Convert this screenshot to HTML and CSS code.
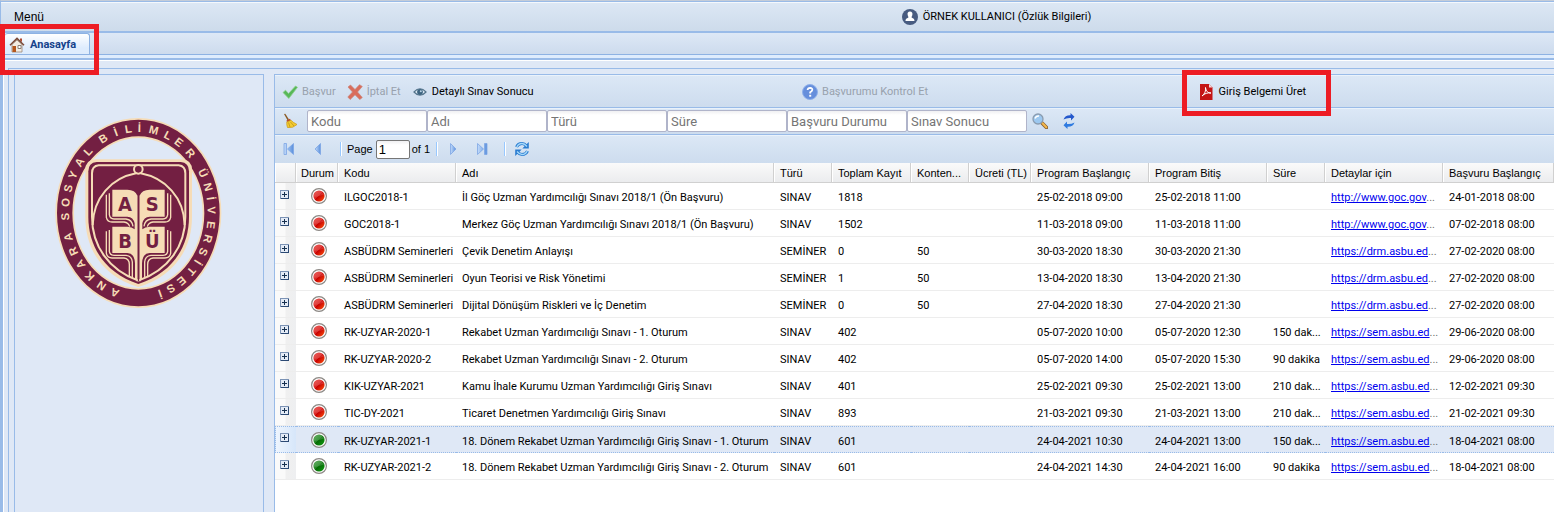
FILE: index.html
```html
<!DOCTYPE html>
<html lang="tr">
<head>
<meta charset="utf-8">
<title>Anasayfa</title>
<link rel="stylesheet" href="styles.css">
</head>
<body>
<svg class="defs" aria-hidden="true">
  <defs>
    <linearGradient id="gRed" x1="0" y1="0" x2="1" y2="1"><stop offset="0" stop-color="#e8504c"/><stop offset=".48" stop-color="#d8201c"/><stop offset=".5" stop-color="#c80000"/><stop offset="1" stop-color="#ff5a10"/></linearGradient>
    <linearGradient id="gGreen" x1="0" y1="0" x2="1" y2="1"><stop offset="0" stop-color="#58a858"/><stop offset=".48" stop-color="#1c801c"/><stop offset=".5" stop-color="#046a04"/><stop offset="1" stop-color="#12a012"/></linearGradient>
    <linearGradient id="gBlue" x1="0" y1="0" x2="1" y2="0"><stop offset="0" stop-color="#c4dcfb"/><stop offset="1" stop-color="#5a8fdc"/></linearGradient>
    <symbol id="red" viewBox="0 0 16 16"><circle cx="8" cy="8" r="7.4" fill="#fff" stroke="#8c8884" stroke-width="1.2"/><circle cx="8" cy="8" r="5.6" fill="url(#gRed)"/><path d="M3 8.6C6 9.400 9 7.500 13 6.500A5.200 5.200 0 0 0 3 7Z" fill="#f08080" opacity=".3"/></symbol>
    <symbol id="green" viewBox="0 0 16 16"><circle cx="8" cy="8" r="7.4" fill="#fff" stroke="#8c8884" stroke-width="1.2"/><circle cx="8" cy="8" r="5.6" fill="url(#gGreen)"/><path d="M3 8.600C6 9.400 9 7.500 13 6.500A5.200 5.200 0 0 0 3 7Z" fill="#8cc88c" opacity=".3"/></symbol>
    <symbol id="plus" viewBox="0 0 9 9"><path d="M0 0H9V9H0Z" fill="#7c93b5"/><path d="M1 1H8V8H1Z" fill="#e4ebf6"/><path d="M8 1H9V9H1V8H8Z" fill="#2c4a74"/><path d="M2 4H7V5H2ZM4 2H5V7H4Z" fill="#16304f"/></symbol>
  </defs>
</svg>

<header class="menubar">
  <button class="menu-btn">Menü</button>
  <button class="user">
    <svg width="16" height="16" viewBox="0 0 16 16"><circle cx="8" cy="8" r="8" fill="#475b80"/><path d="M8 2.600C9.900 2.600 10.700 4 10.400 5.600C10.300 6.900 9.600 7.600 9.600 8.600C10.500 9.300 12.300 9.400 12.500 12H3.500C3.700 9.400 5.500 9.300 6.400 8.600C6.400 7.600 5.700 6.900 5.600 5.600C5.300 4 6.100 2.600 8 2.600Z" fill="#fff"/></svg>
    <span>ÖRNEK KULLANICI (Özlük Bilgileri)</span>
  </button>
</header>

<nav class="tabs">
  <a class="tab" href="#">
    <svg width="16" height="16" viewBox="0 0 16 16"><path d="M3 7.500L8 3L13 7.500V15H3Z" fill="#f3ece2" stroke="#9a8674" stroke-width=".8"/><path d="M11 1.500H13V5L11 3.500Z" fill="#b04a30"/><path d="M1 8.200L8 1.400L15 8.200" fill="none" stroke="#7a4a38" stroke-width="1.500"/><path d="M3.500 9H7V15H3.500Z" fill="#b4561c"/><path d="M9 8.500H12V11.500H9Z" fill="#fff" stroke="#8a8078"/></svg>
    <span>Anasayfa</span>
  </a>
  <span class="mark mark-tab"></span>
</nav>

<main class="frame">
  <div class="workspace">
    <aside class="side">
      <svg class="logo" viewBox="45 21 504 576" width="168" height="192" role="img" aria-label="Ankara Sosyal Bilimler Üniversitesi">
        <defs><path id="ring" d="M295 550A208 242 0 0 1 295 66A208 242 0 0 1 295 550"/></defs>
        <path fill="#f6dcb6" fill-rule="evenodd" d="M295 24A249 285 0 0 1 295 594A249 285 0 0 1 295 24ZM295 84A193 225 0 0 0 295 534A193 225 0 0 0 295 84Z"/>
        <path fill="#731f42" fill-rule="evenodd" d="M295 29A244 280 0 0 1 295 589A244 280 0 0 1 295 29ZM295 79A198 230 0 0 0 295 539A198 230 0 0 0 295 79Z"/>
        <text class="ring-text"><textPath href="#ring" startOffset="4.8%">A</textPath></text>
        <text class="ring-text"><textPath href="#ring" startOffset="7.8%">N</textPath></text>
        <text class="ring-text"><textPath href="#ring" startOffset="10.900%">K</textPath></text>
        <text class="ring-text"><textPath href="#ring" startOffset="13.900%">A</textPath></text>
        <text class="ring-text"><textPath href="#ring" startOffset="16.900%">R</textPath></text>
        <text class="ring-text"><textPath href="#ring" startOffset="20%">A</textPath></text>
        <text class="ring-text"><textPath href="#ring" startOffset="24.200%">S</textPath></text>
        <text class="ring-text"><textPath href="#ring" startOffset="27.100%">O</textPath></text>
        <text class="ring-text"><textPath href="#ring" startOffset="30%">S</textPath></text>
        <text class="ring-text"><textPath href="#ring" startOffset="32.900%">Y</textPath></text>
        <text class="ring-text"><textPath href="#ring" startOffset="35.800%">A</textPath></text>
        <text class="ring-text"><textPath href="#ring" startOffset="38.600%">L</textPath></text>
        <text class="ring-text"><textPath href="#ring" startOffset="42.600%">B</textPath></text>
        <text class="ring-text"><textPath href="#ring" startOffset="45.400%">İ</textPath></text>
        <text class="ring-text"><textPath href="#ring" startOffset="48%">L</textPath></text>
        <text class="ring-text"><textPath href="#ring" startOffset="50.200%">İ</textPath></text>
        <text class="ring-text"><textPath href="#ring" startOffset="53.100%">M</textPath></text>
        <text class="ring-text"><textPath href="#ring" startOffset="56.100%">L</textPath></text>
        <text class="ring-text"><textPath href="#ring" startOffset="58.700%">E</textPath></text>
        <text class="ring-text"><textPath href="#ring" startOffset="61.900%">R</textPath></text>
        <text class="ring-text"><textPath href="#ring" startOffset="66.700%">Ü</textPath></text>
        <text class="ring-text"><textPath href="#ring" startOffset="69.700%">N</textPath></text>
        <text class="ring-text"><textPath href="#ring" startOffset="72.100%">İ</textPath></text>
        <text class="ring-text"><textPath href="#ring" startOffset="74.500%">V</textPath></text>
        <text class="ring-text"><textPath href="#ring" startOffset="77.500%">E</textPath></text>
        <text class="ring-text"><textPath href="#ring" startOffset="80.400%">R</textPath></text>
        <text class="ring-text"><textPath href="#ring" startOffset="83.200%">S</textPath></text>
        <text class="ring-text"><textPath href="#ring" startOffset="85.600%">İ</textPath></text>
        <text class="ring-text"><textPath href="#ring" startOffset="87.800%">T</textPath></text>
        <text class="ring-text"><textPath href="#ring" startOffset="90.600%">E</textPath></text>
        <text class="ring-text"><textPath href="#ring" startOffset="93.200%">S</textPath></text>
        <text class="ring-text"><textPath href="#ring" startOffset="95.600%">İ</textPath></text>
        <path fill="#f6dcb6" d="M165 148H427Q456 150 456 180V320C456 420 400 500 295 531C190 500 136 420 136 320V180Q136 150 165 148Z"/>
        <path fill="#731f42" d="M170 156H422Q447 158 447 184V320C447 414 394 490 295 522C198 490 145 414 145 320V184Q145 158 170 156Z"/>
        <path fill="none" stroke="#f6dcb6" stroke-width="6" d="M176 166H416Q436 168 436 190V320C436 408 386 480 295 512C206 480 156 408 156 320V190Q156 168 176 166Z"/>
        <path fill="none" stroke="#f6dcb6" stroke-width="6" d="M288 190C215 204 160 262 158 345M302 190C376 204 432 262 434 345"/>
        <circle cx="295" cy="178" r="13" fill="#731f42" stroke="#f6dcb6" stroke-width="6"/>
        <g id="leaf">
          <path fill="#f6dcb6" d="M217 239H262Q286 240 291 255V508H285V460Q284 430 262 429H217V350H262Q276 350 284 358V340Q280 321 262 320H217Z"/>
          <g fill="none" stroke="#f6dcb6" stroke-width="4">
            <path d="M208 250V314Q210 327 222 327H258Q276 329 279 349M199 254V322Q202 336 216 336H252Q266 338 269 350"/>
            <path d="M208 360V424Q210 436 222 436H258Q276 438 277 456V504M199 364V430Q202 444 216 444H252Q268 446 268 464V501"/>
          </g>
        </g>
        <use href="#leaf" transform="translate(591 0) scale(-1 1)"/>
        <path stroke="#731f42" stroke-width="4" d="M295.500 250V514"/>
        <path stroke="#f6dcb6" stroke-width="3" d="M291 256V514M300 256V514"/>
        <text class="book-text" x="255" y="304">A</text><text class="book-text" x="337" y="304">S</text>
        <text class="book-text" x="255" y="413">B</text><text class="book-text" x="337" y="413">Ü</text>
      </svg>
    </aside>

    <section class="grid">
      <div class="bar actions">
        <div class="group">
          <button class="tool" disabled><svg width="16" height="16" viewBox="0 0 16 16"><path d="M1 8.500L3.500 6.200L6.500 9.500L13.500 2L15.500 3.300L6.800 14.500Z" fill="#58b858" stroke="#8fcf8f" stroke-width=".8"/></svg><span>Başvur</span></button>
          <button class="tool" disabled><svg width="16" height="16" viewBox="0 0 16 16"><path d="M1 3L3.500 1L8 5.500L12.500 .7L15.300 2.500L10.500 8L15.300 13.500L12.800 15.500L8 10.800L3.200 15.500L.8 13L5.500 8Z" fill="#d96d5c" stroke="#c88478" stroke-width=".7"/></svg><span>İptal Et</span></button>
          <button class="tool"><svg width="16" height="16" viewBox="0 0 16 16"><path d="M2 8Q8 1.500 14 8Q8 14.500 2 8Z" fill="#dbe8f2" stroke="#54748c" stroke-width="1.200"/><circle cx="8" cy="8" r="2.900" fill="#3d6480"/><circle cx="8.800" cy="7.200" r="1" fill="#b7d2e4"/></svg><span>Detaylı Sınav Sonucu</span></button>
        </div>
        <div class="group">
          <button class="tool" disabled><svg width="16" height="16" viewBox="0 0 16 16"><circle cx="8" cy="8" r="7.500" fill="#668fdc" stroke="#8fb0ea"/><path d="M5.600 6Q5.800 3.800 8.100 3.800Q10.400 4 10.300 5.900Q10 7.300 8.200 8.300V9.500" fill="none" stroke="#fff" stroke-width="1.800"/><path d="M7.200 10.800H9.200V12.700H7.200Z" fill="#fff"/></svg><span>Başvurumu Kontrol Et</span></button>
        </div>
        <div class="group">
          <button class="tool"><svg width="16" height="16" viewBox="0 0 16 16"><path d="M1 0H10L13.500 3.500V16H1Z" fill="#c41414"/><path d="M10 0L13.500 3.500H10Z" fill="#f4d8d8"/><path d="M3 12C6 10 7 6.500 6.500 3.500C7 7.500 9 9 12 9C8.500 8.500 5.500 9.500 3 12Z" fill="none" stroke="#fff"/></svg><span>Giriş Belgemi Üret</span></button>
          <span class="mark mark-doc"></span>
        </div>
      </div>

      <form class="bar filters">
        <button class="icon-btn" type="button" aria-label="Temizle"><svg width="16" height="16" viewBox="0 0 16 16"><path d="M2 1L3.300 .8L7 6.500L5.500 7.300Z" fill="#8a5a24"/><path d="M4.500 7.500L8 5.800L9 7.500L5 9.200Z" fill="#b8442c"/><path d="M4.800 9L9 7.300Q11 9.500 15 11.500Q11 15.500 5.500 14.500Q4.500 12 4.800 9Z" fill="#f4cc30" stroke="#c89818" stroke-width=".7"/><path d="M6.500 9.500L8 14M8.500 9L12 13" stroke="#b88a18" stroke-width=".7"/></svg></button>
        <div class="fields">
          <input type="text" aria-label="Kodu" placeholder="Kodu"><input type="text" aria-label="Adı" placeholder="Adı"><input type="text" aria-label="Türü" placeholder="Türü"><input type="text" aria-label="Süre" placeholder="Süre"><input type="text" aria-label="Başvuru Durumu" placeholder="Başvuru Durumu"><input type="text" aria-label="Sınav Sonucu" placeholder="Sınav Sonucu">
        </div>
        <button class="icon-btn" type="button" aria-label="Ara"><svg width="16" height="16" viewBox="0 0 16 16"><path d="M9.500 9.500L14.500 14.500" stroke="#8a6030" stroke-width="3.600" stroke-linecap="round"/><path d="M10.500 10.300L14.300 14.200" stroke="#f4b84c" stroke-width="2" stroke-linecap="round"/><circle cx="6" cy="6" r="5" fill="#9cc8f0" stroke="#8a9cb0" stroke-width="1.300"/><path d="M3 5.500Q4 2.800 7 3" stroke="#fff" stroke-width="1.500" fill="none"/></svg></button>
        <button class="icon-btn" type="button" aria-label="Yenile"><svg width="16" height="16" viewBox="0 0 16 16"><path d="M2.500 6.500Q4 2 9.500 2.200V0L13.500 3.800L10 7.500V5Q6 4.500 2.500 6.500Z" fill="#2458cc"/><path d="M13.500 9.500Q12 14 6.500 13.800V16L2.500 12.200L6 8.500V11Q10 11.500 13.500 9.500Z" fill="#2f7be0"/></svg></button>
      </form>

      <div class="bar paging">
        <button class="page-btn" aria-label="İlk"><svg width="12" height="12" viewBox="0 0 12 12"><path d="M1 .5H3.500V11.500H1ZM10.500 .5V11.500L4.500 6Z" fill="url(#gBlue)" stroke="#7da6e4" stroke-width=".8"/></svg></button>
        <button class="page-btn" aria-label="Önceki"><svg width="12" height="12" viewBox="0 0 12 12"><path d="M8.500 .5V11.500L3 6Z" fill="url(#gBlue)" stroke="#7da6e4" stroke-width=".8"/></svg></button>
        <span class="sep"></span>
        <label for="page">Page</label>
        <input id="page" type="text" value="1">
        <span class="total">of 1</span>
        <span class="sep"></span>
        <button class="page-btn" aria-label="Sonraki"><svg width="12" height="12" viewBox="0 0 12 12"><path d="M3.500 .5V11.500L9 6Z" fill="url(#gBlue)" stroke="#7da6e4" stroke-width=".8"/></svg></button>
        <button class="page-btn" aria-label="Son"><svg width="12" height="12" viewBox="0 0 12 12"><path d="M8.500 .5H11V11.500H8.500ZM1.500 .5V11.500L7.500 6Z" fill="url(#gBlue)" stroke="#7da6e4" stroke-width=".8"/></svg></button>
        <span class="sep"></span>
        <button class="page-btn" aria-label="Yenile"><svg width="16" height="16" viewBox="0 0 16 16"><path d="M2.500 6Q4 2.500 8 2.500Q10.500 2.500 12.500 5M13.500 10Q12 13.500 8 13.500Q5.500 13.500 3.500 11" fill="none" stroke="#2a7cd0" stroke-width="3"/><path d="M14.800 1V7.500H8.300ZM1.200 15V8.500H7.700Z" fill="#2a7cd0"/><path d="M2.800 6Q4.300 2.500 8 2.500Q10.500 2.500 13 5.500M13.200 10Q11.700 13.500 8 13.500Q5.500 13.500 3 10.500" fill="none" stroke="#a4d8fa" stroke-width="1.300"/></svg></button>
      </div>

      <table>
        <colgroup><col class="w-exp"><col class="w-state"><col class="w-l"><col class="w-name"><col class="w-s"><col class="w-total"><col class="w-s"><col class="w-fee"><col class="w-l"><col class="w-l"><col class="w-s"><col class="w-l"><col></colgroup>
        <thead><tr><th></th><th class="state">Durum</th><th>Kodu</th><th>Adı</th><th>Türü</th><th>Toplam Kayıt</th><th>Konten...</th><th>Ücreti (TL)</th><th>Program Başlangıç</th><th>Program Bitiş</th><th>Süre</th><th>Detaylar için</th><th>Başvuru Başlangıç</th></tr></thead>
        <tbody>
          <tr><td class="exp"><button aria-label="Aç"><svg width="9" height="9"><use href="#plus"/></svg></button></td><td class="state"><svg width="16" height="16"><use href="#red"/></svg></td><td>ILGOC2018-1</td><td>İl Göç Uzman Yardımcılığı Sınavı 2018/1 (Ön Başvuru)</td><td>SINAV</td><td>1818</td><td></td><td></td><td>25-02-2018 09:00</td><td>25-02-2018 11:00</td><td></td><td class="link"><a href="#">http://www.goc.gov</a>...</td><td>24-01-2018 08:00</td></tr>
          <tr><td class="exp"><button aria-label="Aç"><svg width="9" height="9"><use href="#plus"/></svg></button></td><td class="state"><svg width="16" height="16"><use href="#red"/></svg></td><td>GOC2018-1</td><td>Merkez Göç Uzman Yardımcılığı Sınavı 2018/1 (Ön Başvuru)</td><td>SINAV</td><td>1502</td><td></td><td></td><td>11-03-2018 09:00</td><td>11-03-2018 11:00</td><td></td><td class="link"><a href="#">http://www.goc.gov</a>...</td><td>07-02-2018 08:00</td></tr>
          <tr><td class="exp"><button aria-label="Aç"><svg width="9" height="9"><use href="#plus"/></svg></button></td><td class="state"><svg width="16" height="16"><use href="#red"/></svg></td><td>ASBÜDRM Seminerleri</td><td>Çevik Denetim Anlayışı</td><td>SEMİNER</td><td>0</td><td>50</td><td></td><td>30-03-2020 18:30</td><td>30-03-2020 21:30</td><td></td><td class="link"><a href="#">https://drm.asbu.ed</a>...</td><td>27-02-2020 08:00</td></tr>
          <tr><td class="exp"><button aria-label="Aç"><svg width="9" height="9"><use href="#plus"/></svg></button></td><td class="state"><svg width="16" height="16"><use href="#red"/></svg></td><td>ASBÜDRM Seminerleri</td><td>Oyun Teorisi ve Risk Yönetimi</td><td>SEMİNER</td><td>1</td><td>50</td><td></td><td>13-04-2020 18:30</td><td>13-04-2020 21:30</td><td></td><td class="link"><a href="#">https://drm.asbu.ed</a>...</td><td>27-02-2020 08:00</td></tr>
          <tr><td class="exp"><button aria-label="Aç"><svg width="9" height="9"><use href="#plus"/></svg></button></td><td class="state"><svg width="16" height="16"><use href="#red"/></svg></td><td>ASBÜDRM Seminerleri</td><td>Dijital Dönüşüm Riskleri ve İç Denetim</td><td>SEMİNER</td><td>0</td><td>50</td><td></td><td>27-04-2020 18:30</td><td>27-04-2020 21:30</td><td></td><td class="link"><a href="#">https://drm.asbu.ed</a>...</td><td>27-02-2020 08:00</td></tr>
          <tr><td class="exp"><button aria-label="Aç"><svg width="9" height="9"><use href="#plus"/></svg></button></td><td class="state"><svg width="16" height="16"><use href="#red"/></svg></td><td>RK-UZYAR-2020-1</td><td>Rekabet Uzman Yardımcılığı Sınavı - 1. Oturum</td><td>SINAV</td><td>402</td><td></td><td></td><td>05-07-2020 10:00</td><td>05-07-2020 12:30</td><td>150 dak...</td><td class="link"><a href="#">https://sem.asbu.ed</a>...</td><td>29-06-2020 08:00</td></tr>
          <tr><td class="exp"><button aria-label="Aç"><svg width="9" height="9"><use href="#plus"/></svg></button></td><td class="state"><svg width="16" height="16"><use href="#red"/></svg></td><td>RK-UZYAR-2020-2</td><td>Rekabet Uzman Yardımcılığı Sınavı - 2. Oturum</td><td>SINAV</td><td>402</td><td></td><td></td><td>05-07-2020 14:00</td><td>05-07-2020 15:30</td><td>90 dakika</td><td class="link"><a href="#">https://sem.asbu.ed</a>...</td><td>29-06-2020 08:00</td></tr>
          <tr><td class="exp"><button aria-label="Aç"><svg width="9" height="9"><use href="#plus"/></svg></button></td><td class="state"><svg width="16" height="16"><use href="#red"/></svg></td><td>KIK-UZYAR-2021</td><td>Kamu İhale Kurumu Uzman Yardımcılığı Giriş Sınavı</td><td>SINAV</td><td>401</td><td></td><td></td><td>25-02-2021 09:30</td><td>25-02-2021 13:00</td><td>210 dak...</td><td class="link"><a href="#">https://sem.asbu.ed</a>...</td><td>12-02-2021 09:30</td></tr>
          <tr><td class="exp"><button aria-label="Aç"><svg width="9" height="9"><use href="#plus"/></svg></button></td><td class="state"><svg width="16" height="16"><use href="#red"/></svg></td><td>TIC-DY-2021</td><td>Ticaret Denetmen Yardımcılığı Giriş Sınavı</td><td>SINAV</td><td>893</td><td></td><td></td><td>21-03-2021 09:30</td><td>21-03-2021 13:00</td><td>210 dak...</td><td class="link"><a href="#">https://sem.asbu.ed</a>...</td><td>21-02-2021 09:30</td></tr>
          <tr class="selected"><td class="exp"><button aria-label="Aç"><svg width="9" height="9"><use href="#plus"/></svg></button></td><td class="state"><svg width="16" height="16"><use href="#green"/></svg></td><td>RK-UZYAR-2021-1</td><td>18. Dönem Rekabet Uzman Yardımcılığı Giriş Sınavı - 1. Oturum</td><td>SINAV</td><td>601</td><td></td><td></td><td>24-04-2021 10:30</td><td>24-04-2021 13:00</td><td>150 dak...</td><td class="link"><a href="#">https://sem.asbu.ed</a>...</td><td>18-04-2021 08:00</td></tr>
          <tr><td class="exp"><button aria-label="Aç"><svg width="9" height="9"><use href="#plus"/></svg></button></td><td class="state"><svg width="16" height="16"><use href="#green"/></svg></td><td>RK-UZYAR-2021-2</td><td>18. Dönem Rekabet Uzman Yardımcılığı Giriş Sınavı - 2. Oturum</td><td>SINAV</td><td>601</td><td></td><td></td><td>24-04-2021 14:30</td><td>24-04-2021 16:00</td><td>90 dakika</td><td class="link"><a href="#">https://sem.asbu.ed</a>...</td><td>18-04-2021 08:00</td></tr>
        </tbody>
      </table>
    </section>
  </div>
</main>
</body>
</html>
```

FILE: styles.css
```css
* { box-sizing: border-box; }
body {
  margin: 0;
  height: 100vh;
  display: flex;
  flex-direction: column;
  overflow: hidden;
  background: #dfe8f6;
  color: #000;
  font: 11px/14px Roboto, sans-serif;
}
button {
  padding: 0;
  border: 0;
  background: none;
  color: inherit;
  font: inherit;
  display: flex;
  align-items: center;
}
svg { display: block; flex: none; }
.defs { position: absolute; width: 0; height: 0; }

.menubar {
  display: flex;
  align-items: center;
  height: 33px;
  padding-top: 2px;
  border-top: 1px solid #c4ccd8;
  border-left: 1px solid #99bbe8;
  border-bottom: 2px solid #99bbe8;
  box-shadow: inset 0 1px #99bbe8, inset 0 2px #f4f8fd;
  background: linear-gradient(#dde8f5, #cddbeb);
}
.menu-btn {
  flex: 0 0 58%;
  padding-left: 13px;
  font: 12px/14px "Liberation Sans", sans-serif;
}
.user { gap: 5px; }

.tabs {
  position: relative;
  display: flex;
  align-items: flex-end;
  height: 27px;
  padding: 0 0 4px 4px;
  border-left: 1px solid #99bbe8;
  border-bottom: 2px solid #99bbe8;
  background: linear-gradient(#dde8f6, #cddbed 21px, #8db2e3 21px, #8db2e3 22px, #deecfd 22px);
}
.tab {
  display: flex;
  align-items: center;
  gap: 5px;
  height: 21px;
  padding: 2px 13px 0 4px;
  border: 1px solid #8db2e3;
  border-width: 1px 1px 0 0;
  border-radius: 3px 3px 0 0;
  background: linear-gradient(#fff, #deecfd 70%);
  color: #15428b;
  font-weight: bold;
  text-decoration: none;
}
.mark { position: absolute; border: 5px solid #ed1c24; z-index: 2; pointer-events: none; }
.mark-tab { left: -1px; top: -9px; width: 99px; height: 51px; }
.mark-doc { left: -17px; top: -14px; width: 149px; height: 46px; }

.frame {
  flex: 1;
  min-height: 0;
  display: flex;
  padding: 7px 0 0 5px;
  border-left: 3px solid #99bbe8;
  border-top: 1px solid #fff;
  box-shadow: inset 1px 0 #fff;
}
.workspace {
  flex: 1;
  min-width: 0;
  display: flex;
  gap: 10px;
  padding: 5px 0 0 5px;
  border: 1px solid #99bbe8;
  border-width: 1px 0 0 1px;
}
.side {
  flex: 0 0 250px;
  padding: 42px 0 0 40px;
  border: 1px solid #99bbe8;
  border-bottom: 0;
}
.ring-text {
  font: bold 34px "Liberation Sans", sans-serif;
  fill: #f6dcb6;
  text-anchor: middle;
}
.book-text {
  font: bold 60px "DejaVu Sans Condensed", "DejaVu Sans", sans-serif;
  fill: #731f42;
  text-anchor: middle;
}

.grid {
  flex: 1;
  min-width: 0;
  border: 1px solid #99bbe8;
  border-width: 1px 0 0 1px;
  background: #fff;
}
.bar {
  display: flex;
  align-items: center;
  border-bottom: 1px solid #99bbe8;
  background: linear-gradient(#dce8f6, #cddcee);
  box-shadow: inset 0 1px #eaf2fb;
}
.actions {
  display: grid;
  grid-template-columns: 518fr 395fr 354fr;
  height: 33px;
  padding: 2px 0 0 7px;
}
.group { position: relative; display: flex; gap: 11px; justify-self: start; }
.tool { gap: 4px; }
.tool:disabled { color: #98a1ad; }
.filters { height: 27px; padding-left: 7px; }
.icon-btn { flex: none; margin-right: 14px; }
.fields { display: flex; margin-right: 5px; }
.fields + .icon-btn { margin-right: 13px; }
.filters .icon-btn:first-child { margin-right: 9px; }
input {
  margin: 0;
  border: 1px solid #b0b4ca;
  border-radius: 2px;
  background: linear-gradient(#f0f0f2, #fff 4px);
  color: #000;
}
.fields input {
  width: 120px;
  height: 22px;
  padding: 0 3px;
  font: 13px/18px Roboto, sans-serif;
}
input::placeholder { color: #757575; opacity: 1; }
.paging {
  height: 28px;
  padding-left: 8px;
  border-bottom: 0;
  font: 11px/14px "Liberation Sans", sans-serif;
}
.page-btn { flex: none; margin-right: 17px; }
.page-btn + .sep { margin-left: -1px; }
.sep { width: 2px; height: 14px; margin-right: 5px; border-left: 1px solid #98c8ff; border-right: 1px solid #fff; }
#page {
  width: 34px;
  height: 19px;
  margin: 0 2px 0 3px;
  padding: 0 2px;
  border-color: #767676;
  font: 13px/15px "Liberation Sans", sans-serif;
}
.total { margin-right: 6px; }
.total + .sep { margin-right: 9px; }
.page-btn:last-child { margin: 0 0 0 3px; }

table { width: 100%; table-layout: fixed; border-collapse: separate; border-spacing: 0; }
.w-exp { width: 21px; }
.w-state { width: 42px; }
.w-s { width: 58px; }
.w-total { width: 79px; }
.w-fee { width: 62px; }
.w-l { width: 118px; }
.w-name { width: 318px; }
th, td {
  padding: 0 0 0 6px;
  overflow: hidden;
  white-space: nowrap;
  text-overflow: ellipsis;
  text-align: left;
}
th {
  height: 20px;
  border-right: 1px solid #d0d0d0;
  border-bottom: 1px solid #d0d0d0;
  background: linear-gradient(#fafafa, #ebecee);
  box-shadow: inset 1px 0 #fff;
  font: 11px/14px "Liberation Sans", sans-serif;
}
td { height: 27px; padding-top: 4px; border-bottom: 1px solid #ededed; }
th.state { padding: 0 3px 0 5px; }
td.state { padding: 0 3px 0 7px; }
td.state svg { margin: 0 auto; }
td.exp {
  padding: 7px 0 0 5px;
  vertical-align: top;
  background: linear-gradient(90deg, #fafafa 10px, #f0f0f0 11px, #eeeff1);
}
.selected td {
  border-top: 1px dotted #99bbe8;
  border-bottom: 1px dotted #99bbe8;
  background: #dfe8f6;
}
.selected td.exp { border-left: 1px dotted #99bbe8; padding: 6px 0 0 4px; background: linear-gradient(90deg, #eef5fe, #d6e6fa); }
td.link { color: #6e6e6e; }
a { color: #00e; }
```
